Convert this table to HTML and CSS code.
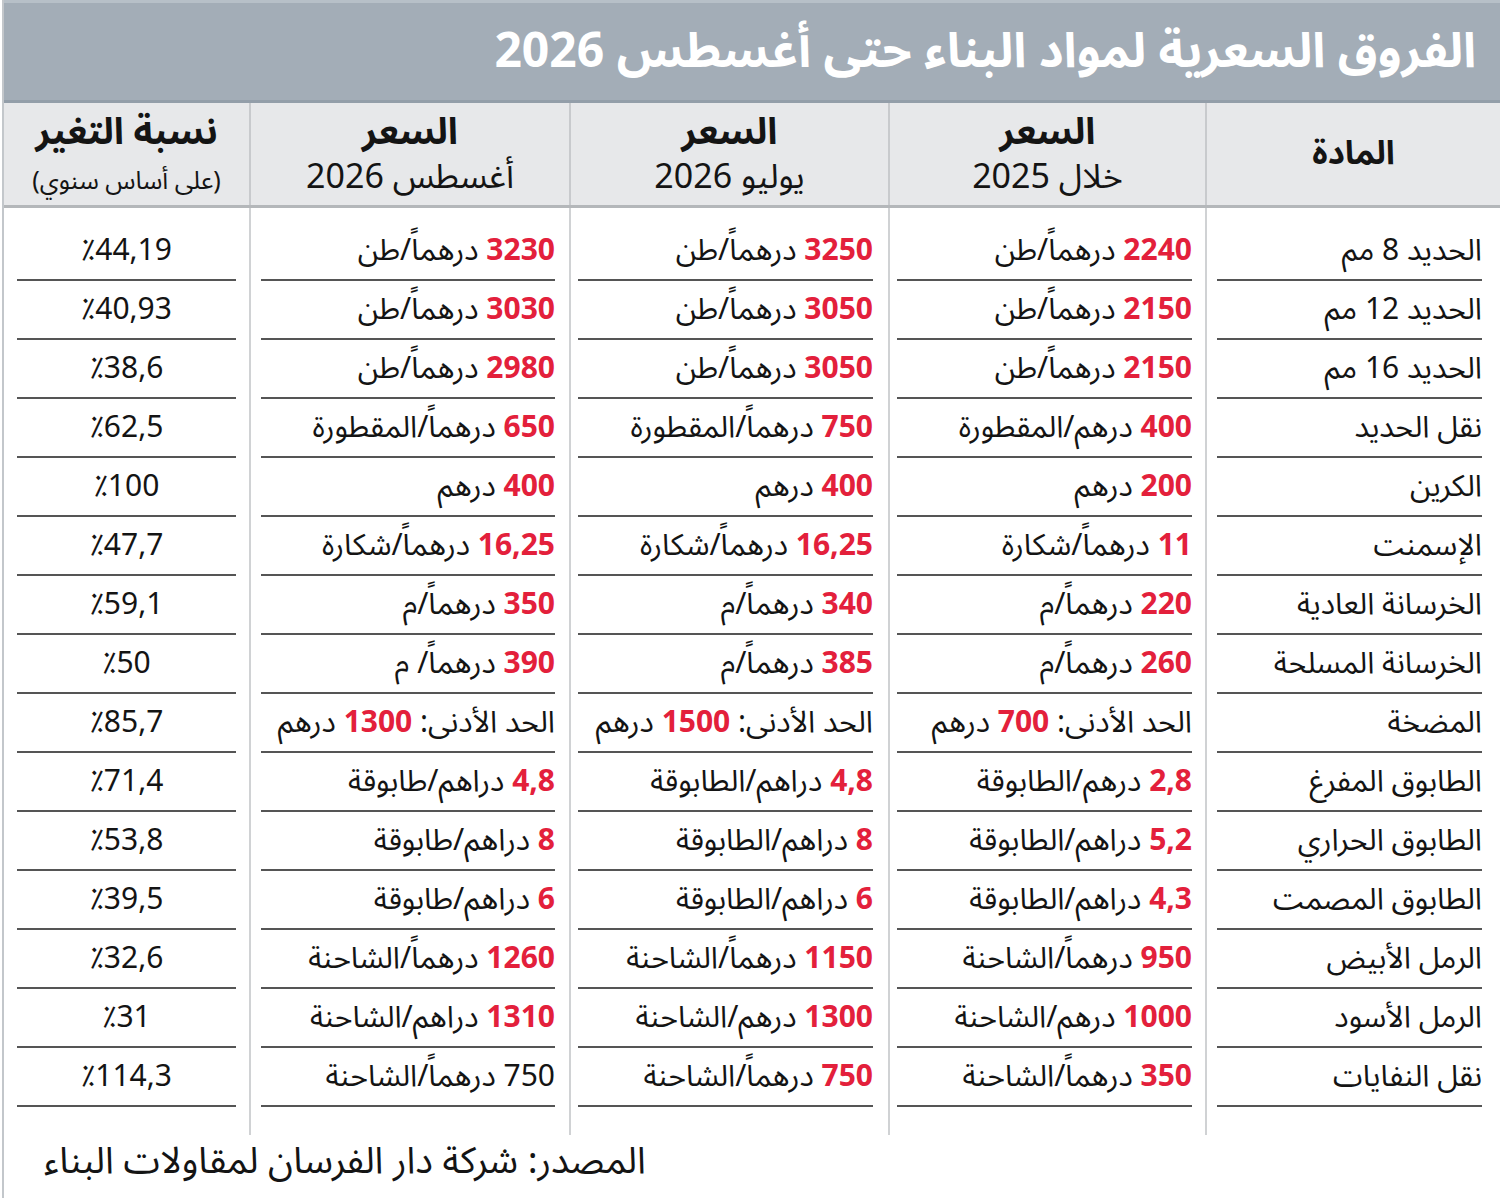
FILE: index.html
```html
<!DOCTYPE html>
<html lang="ar" dir="rtl">
<head>
<meta charset="utf-8">
<title>الفروق السعرية لمواد البناء</title>
<link rel="stylesheet" href="styles.css">
</head>
<body>
<div class="figure">
  <div class="title">الفروق السعرية لمواد البناء حتى أغسطس 2026</div>
  <div class="head">
    <div class="hcell"><span class="hb hm">المادة</span></div>
    <div class="hcell"><span class="hb">السعر</span><span class="hs">خلال 2025</span></div>
    <div class="hcell"><span class="hb">السعر</span><span class="hs">يوليو 2026</span></div>
    <div class="hcell"><span class="hb">السعر</span><span class="hs">أغسطس 2026</span></div>
    <div class="hcell last"><span class="hb">نسبة التغير</span><span class="hx">(على أساس سنوي)</span></div>
  </div>
  <div class="body">
    <div class="col c1">
      <div class="row">الحديد 8 مم</div>
      <div class="row">الحديد 12 مم</div>
      <div class="row">الحديد 16 مم</div>
      <div class="row">نقل الحديد</div>
      <div class="row">الكرين</div>
      <div class="row">الإسمنت</div>
      <div class="row">الخرسانة العادية</div>
      <div class="row">الخرسانة المسلحة</div>
      <div class="row">المضخة</div>
      <div class="row">الطابوق المفرغ</div>
      <div class="row">الطابوق الحراري</div>
      <div class="row">الطابوق المصمت</div>
      <div class="row">الرمل الأبيض</div>
      <div class="row">الرمل الأسود</div>
      <div class="row">نقل النفايات</div>
    </div>
    <div class="col c2">
      <div class="row"><span><b class="num">2240</b> درهماً/طن</span></div>
      <div class="row"><span><b class="num">2150</b> درهماً/طن</span></div>
      <div class="row"><span><b class="num">2150</b> درهماً/طن</span></div>
      <div class="row"><span><b class="num">400</b> درهم/المقطورة</span></div>
      <div class="row"><span><b class="num">200</b> درهم</span></div>
      <div class="row"><span><b class="num">11</b> درهماً/شكارة</span></div>
      <div class="row"><span><b class="num">220</b> درهماً/م</span></div>
      <div class="row"><span><b class="num">260</b> درهماً/م</span></div>
      <div class="row"><span>الحد الأدنى: <b class="num">700</b> درهم</span></div>
      <div class="row"><span><b class="num">2,8</b> درهم/الطابوقة</span></div>
      <div class="row"><span><b class="num">5,2</b> دراهم/الطابوقة</span></div>
      <div class="row"><span><b class="num">4,3</b> دراهم/الطابوقة</span></div>
      <div class="row"><span><b class="num">950</b> درهماً/الشاحنة</span></div>
      <div class="row"><span><b class="num">1000</b> درهم/الشاحنة</span></div>
      <div class="row"><span><b class="num">350</b> درهماً/الشاحنة</span></div>
    </div>
    <div class="col c3">
      <div class="row"><span><b class="num">3250</b> درهماً/طن</span></div>
      <div class="row"><span><b class="num">3050</b> درهماً/طن</span></div>
      <div class="row"><span><b class="num">3050</b> درهماً/طن</span></div>
      <div class="row"><span><b class="num">750</b> درهماً/المقطورة</span></div>
      <div class="row"><span><b class="num">400</b> درهم</span></div>
      <div class="row"><span><b class="num">16,25</b> درهماً/شكارة</span></div>
      <div class="row"><span><b class="num">340</b> درهماً/م</span></div>
      <div class="row"><span><b class="num">385</b> درهماً/م</span></div>
      <div class="row"><span>الحد الأدنى: <b class="num">1500</b> درهم</span></div>
      <div class="row"><span><b class="num">4,8</b> دراهم/الطابوقة</span></div>
      <div class="row"><span><b class="num">8</b> دراهم/الطابوقة</span></div>
      <div class="row"><span><b class="num">6</b> دراهم/الطابوقة</span></div>
      <div class="row"><span><b class="num">1150</b> درهماً/الشاحنة</span></div>
      <div class="row"><span><b class="num">1300</b> درهم/الشاحنة</span></div>
      <div class="row"><span><b class="num">750</b> درهماً/الشاحنة</span></div>
    </div>
    <div class="col c4">
      <div class="row"><span><b class="num">3230</b> درهماً/طن</span></div>
      <div class="row"><span><b class="num">3030</b> درهماً/طن</span></div>
      <div class="row"><span><b class="num">2980</b> درهماً/طن</span></div>
      <div class="row"><span><b class="num">650</b> درهماً/المقطورة</span></div>
      <div class="row"><span><b class="num">400</b> درهم</span></div>
      <div class="row"><span><b class="num">16,25</b> درهماً/شكارة</span></div>
      <div class="row"><span><b class="num">350</b> درهماً/م</span></div>
      <div class="row"><span><b class="num">390</b> درهماً/ م</span></div>
      <div class="row"><span>الحد الأدنى: <b class="num">1300</b> درهم</span></div>
      <div class="row"><span><b class="num">4,8</b> دراهم/طابوقة</span></div>
      <div class="row"><span><b class="num">8</b> دراهم/طابوقة</span></div>
      <div class="row"><span><b class="num">6</b> دراهم/طابوقة</span></div>
      <div class="row"><span><b class="num">1260</b> درهماً/الشاحنة</span></div>
      <div class="row"><span><b class="num">1310</b> دراهم/الشاحنة</span></div>
      <div class="row"><span>750 درهماً/الشاحنة</span></div>
    </div>
    <div class="col c5">
      <div class="row">٪44,19</div>
      <div class="row">٪40,93</div>
      <div class="row">٪38,6</div>
      <div class="row">٪62,5</div>
      <div class="row">٪100</div>
      <div class="row">٪47,7</div>
      <div class="row">٪59,1</div>
      <div class="row">٪50</div>
      <div class="row">٪85,7</div>
      <div class="row">٪71,4</div>
      <div class="row">٪53,8</div>
      <div class="row">٪39,5</div>
      <div class="row">٪32,6</div>
      <div class="row">٪31</div>
      <div class="row">٪114,3</div>
    </div>
  </div>
  <div class="source">المصدر: شركة دار الفرسان لمقاولات البناء</div>
</div>
</body>
</html>
```

FILE: styles.css
```css
html, body {
  margin: 0;
  padding: 0;
  background: #ffffff;
}

body {
  font-family: "Noto Sans Arabic", "Noto Naskh Arabic", "DejaVu Sans", sans-serif;
  color: #141414;
}

.figure {
  direction: rtl;
  width: 1496px;
  height: 1198px;
  margin-left: 2px;
  border-left: 2px solid #c3c7cb;
}

.title {
  box-sizing: border-box;
  height: 103px;
  background: #a3adb7;
  border-top: 3px solid #b7c0c8;
  border-bottom: 3px solid #939ea9;
  color: #ffffff;
  font-weight: 700;
  font-size: 48px;
  display: flex;
  align-items: center;
  padding-right: 24px;
}

.head {
  display: grid;
  grid-template-columns: 295px 317px 319px 320px 245px;
  height: 102px;
  background: #e7e8ea;
  border-bottom: 3px solid #b4b7ba;
}

.hcell {
  display: flex;
  flex-direction: column;
  align-items: center;
  justify-content: center;
  gap: 2px;
  border-left: 2px solid #c8cacd;
}

.hcell.last {
  border-left: none;
}

.hb {
  font-weight: 700;
  font-size: 37px;
  line-height: 44px;
}

.hb.hm {
  font-size: 33px;
}

.hs {
  font-size: 34px;
  line-height: 42px;
}

.hx {
  font-size: 25px;
  line-height: 34px;
  margin-top: 8px;
}

.body {
  display: grid;
  grid-template-columns: 295px 317px 319px 320px 245px;
  height: 927px;
}

.col {
  border-left: 2px solid #d0d2d4;
  padding: 14px 14px 0 10px;
}

.col.c1 {
  padding-right: 18px;
}

.col.c2 {
  padding-right: 13px;
  padding-left: 7px;
}

.col.c3 {
  padding-right: 15px;
  padding-left: 7px;
}

.col.c5 {
  border-left: none;
  padding: 14px 13px 0 13px;
}

.row {
  box-sizing: border-box;
  height: 59px;
  border-bottom: 2px solid #555555;
  display: flex;
  align-items: center;
  font-size: 30px;
  white-space: nowrap;
}

.c5 .row {
  justify-content: center;
  font-size: 30px;
  letter-spacing: 2px;
}

.num {
  color: #e3203b;
  font-weight: 700;
}

.source {
  box-sizing: border-box;
  height: 63px;
  display: flex;
  align-items: center;
  justify-content: flex-end;
  padding-left: 40px;
  padding-bottom: 12px;
  font-size: 37px;
}
```
